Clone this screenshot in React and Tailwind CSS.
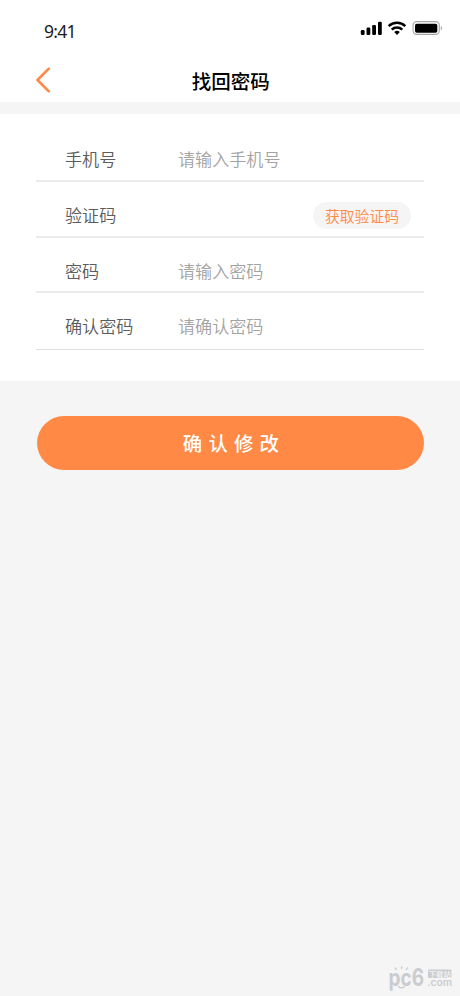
// FILE: App.jsx
// PURPOSE: Reset password screen (phone number, SMS code, new password)

import React, { useState } from 'react'

// Form rows, top to bottom
const FIELDS = [
  { name: 'phone',    label: '手机号',   placeholder: '请输入手机号', type: 'tel',      row: 'h-[68px] pt-[33px] border-b-2 border-[#ebebeb]' },
  { name: 'code',     label: '验证码',   placeholder: '',             type: 'text',     row: 'h-14 pt-[21px] border-b-2 border-[#ebebeb]', hasCodeButton: true },
  { name: 'password', label: '密码',     placeholder: '请输入密码',   type: 'password', row: 'h-[55px] pt-[21px] border-b-2 border-[#ebebeb]' },
  { name: 'confirm',  label: '确认密码', placeholder: '请确认密码',   type: 'password', row: 'h-[57px] pt-[21px] border-b border-[#dedede]' },
]

function StatusBar() {
  return (
    <div className="flex h-[60px] items-start justify-between pl-11 pr-[17px]">
      <span className="mt-[19px] font-['Noto_Sans'] text-[17.5px] leading-6 tracking-[-0.7px] text-[#1c1c1c]">9:41</span>
      <svg className="mt-5" width="83" height="17" viewBox="0 0 83 17" fill="none">
        {/* Signal */}
        <g fill="#000">
          <rect x="0.8" y="10" width="3.8" height="5" rx="1.2" />
          <rect x="6.5" y="7.6" width="3.8" height="7.4" rx="1.2" />
          <rect x="12.2" y="5" width="3.8" height="10" rx="1.2" />
          <rect x="18" y="1.7" width="3.8" height="13.3" rx="1.2" />
        </g>
        {/* Wi-Fi */}
        <g stroke="#000" strokeWidth="2.5">
          <path d="M28.7 6.2a12 12 0 0 1 16.6 0" />
          <path d="M31.7 9.6a7.7 7.7 0 0 1 10.6 0" />
        </g>
        <path d="M34.2 12.1a4.2 4.2 0 0 1 5.6 0L37 15z" fill="#000" />
        {/* Battery */}
        <rect x="53.1" y="1.6" width="26.2" height="12.8" rx="3.6" stroke="#a6a6a6" strokeWidth="1.1" />
        <rect x="55" y="3.7" width="22.3" height="9" rx="1.8" fill="#000" />
        <path d="M80.8 6v4.4c1.8-.8 1.8-3.6 0-4.4z" fill="#a6a6a6" />
      </svg>
    </div>
  )
}

function Header() {
  return (
    <header className="grid h-[42px] grid-cols-[60px_1fr_60px] items-center">
      <button type="button" aria-label="返回" className="pb-0.5 pl-[35px]">
        <svg width="17" height="26" viewBox="0 0 17 26" fill="none">
          <path d="M13.8 1.6 2.5 13l11.3 11.3" stroke="#ff8945" strokeWidth="2.6" strokeLinecap="round" strokeLinejoin="round" />
        </svg>
      </button>
      <h1 className="pl-[1.5px] text-center text-[19.5px] font-medium leading-7 text-black">找回密码</h1>
    </header>
  )
}

function Field({ field, value, onChange }) {
  return (
    <div className={`flex items-start pl-[29px] pr-[13px] ${field.row}`}>
      <label htmlFor={field.name} className="h-6 w-[113px] shrink-0 text-[17.1px] font-[350] leading-6 text-[#5c5c5c]">
        {field.label}
      </label>
      <input
        id={field.name}
        type={field.type}
        value={value}
        onChange={e => onChange(field.name, e.target.value)}
        placeholder={field.placeholder}
        className="h-6 min-w-0 flex-1 text-[17.1px] font-[350] leading-6 text-[#5c5c5c] placeholder:text-[#a3a3a3] focus:outline-none"
      />
      {field.hasCodeButton && (
        <button type="button" className="-mt-px h-[27px] w-[98px] shrink-0 rounded-full bg-[#f5f5f5] text-[14.8px] font-[350] leading-[26px] text-[#ff8945]">
          获取验证码
        </button>
      )}
    </div>
  )
}

// Site mark in the bottom right corner
function SiteMark() {
  return (
    <svg className="absolute bottom-0 right-0" width="76" height="36" viewBox="0 0 76 36" fill="#cbccd0">
      <text x="4.5" y="25.5" fontSize="24" fontFamily="Inter, sans-serif" fontWeight="700" textLength="35.5" lengthAdjust="spacingAndGlyphs">pc6</text>
      {/* Lashes and smile */}
      <g stroke="#cbccd0" strokeWidth="1.3" strokeLinecap="round" fill="none">
        <path d="M12.6 9.6 11.2 8M17.6 8.6V6.6M22.2 9.6l1.4-1.7" />
        <path d="M14.5 26.6c1.8 1.6 4.2 1.6 6 0" />
      </g>
      <rect x="44" y="9.5" width="23.5" height="8.5" rx="1" />
      <text x="44.7" y="16.5" fontSize="7.4" fontFamily="'Noto Sans CJK SC', sans-serif" fontWeight="500" fill="#f5f5f5">下载站</text>
      <text x="43.2" y="25.5" fontSize="9.6" fontFamily="Inter, sans-serif" fontWeight="600" textLength="25" lengthAdjust="spacingAndGlyphs">.com</text>
    </svg>
  )
}

export default function App() {
  const [form, setForm] = useState({ phone: '', code: '', password: '', confirm: '' })

  const handleChange = (name, value) => setForm(prev => ({ ...prev, [name]: value }))

  return (
    <div className="relative min-h-screen w-full bg-[#f5f5f5] font-['Noto_Sans_CJK_SC',sans-serif]">
      <div className="bg-white">
        <StatusBar />
        <Header />
      </div>

      {/* Form card */}
      <form className="mt-3 bg-white px-9 pb-[31px]">
        {FIELDS.map(f => (
          <Field key={f.name} field={f} value={form[f.name]} onChange={handleChange} />
        ))}
      </form>

      {/* Submit */}
      <div className="px-9 pl-[37px] pt-[35px]">
        <button type="button" className="h-[54px] w-full rounded-full bg-[#ff8945] pl-[7px] text-[19.4px] font-medium tracking-[6.2px] text-white">
          确认修改
        </button>
      </div>

      <SiteMark />
    </div>
  )
}
